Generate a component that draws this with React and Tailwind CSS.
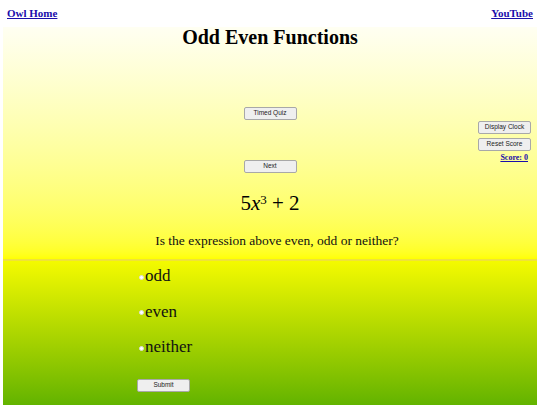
import React, { useState } from 'react';

const serif = { fontFamily: '"Liberation Serif", "Times New Roman", serif' };
const sans = { fontFamily: '"Liberation Sans", Arial, sans-serif' };

function SmallButton({ children, className = '' }) {
  return (
    <button
      style={sans}
      className={`h-[13px] w-[53px] rounded-[2px] border border-[#a8a8a8] bg-[#efefef] text-[6.5px] leading-none text-[#222] ${className}`}
    >
      {children}
    </button>
  );
}

export default function App() {
  const [choice, setChoice] = useState(null);
  const options = ['odd', 'even', 'neither'];

  return (
    <div className="h-[405px] w-[540px] overflow-hidden bg-white px-[3px]" style={serif}>
      {/* Top links */}
      <div className="flex h-[27px] items-center justify-between px-[4px] pb-[1px]">
        <a href="#" className="text-[11px] font-bold text-[#1a0dab] underline">Owl Home</a>
        <a href="#" className="text-[11px] font-bold text-[#1a0dab] underline">YouTube</a>
      </div>

      {/* Question area */}
      <div className="flex h-[232px] flex-col bg-gradient-to-b from-[#fffff2] to-[#ffff00]">
        <h1 className="mt-[-1px] text-center text-[20px] font-bold leading-[22px] text-black">Odd Even Functions</h1>

        <div className="grid grid-cols-[1fr_53px_1fr]">
          <div />
          <div className="flex flex-col">
            <SmallButton className="mt-[59px]">Timed Quiz</SmallButton>
            <SmallButton className="mt-[40px]">Next</SmallButton>
          </div>
          <div className="flex flex-col items-end pr-[6px]">
            <SmallButton className="mt-[73px]">Display Clock</SmallButton>
            <SmallButton className="mt-[4px]">Reset Score</SmallButton>
            <a href="#" className="mt-[2px] mr-[3px] text-[8px] font-bold leading-[10px] text-[#1a0dab] underline">Score: 0</a>
          </div>
        </div>

        <div className="mt-[18px] text-center text-[21px] leading-[24px] text-black">
          5<i>x</i><sup className="text-[13px]">3</sup>&nbsp;+&nbsp;2
        </div>

        <p className="mt-[18px] pl-[14px] text-center text-[13.5px] leading-[15px] text-[#111]">
          Is the expression above even, odd or neither?
        </p>
      </div>

      <div className="h-[2px] bg-[#efe23a]" />

      {/* Answers */}
      <div className="flex h-[144px] flex-col items-start bg-gradient-to-b from-[#f4fa00] to-[#62b300] pl-[134px]">
        <div className="mt-[-3px]">
          {options.map((o) => (
            <label key={o} className="flex h-[35.5px] cursor-pointer items-center">
              <span
                onClick={() => setChoice(o)}
                className={`ml-[2px] mr-[1px] mt-[3px] inline-block h-[5px] w-[5px] rounded-full border border-[#ddd] ${choice === o ? 'bg-[#1a0dab]' : 'bg-white'}`}
              />
              <span className="text-[17px] leading-none text-[#111]">{o}</span>
            </label>
          ))}
        </div>
        <SmallButton className="mt-[14px]">Submit</SmallButton>
      </div>
    </div>
  );
}
